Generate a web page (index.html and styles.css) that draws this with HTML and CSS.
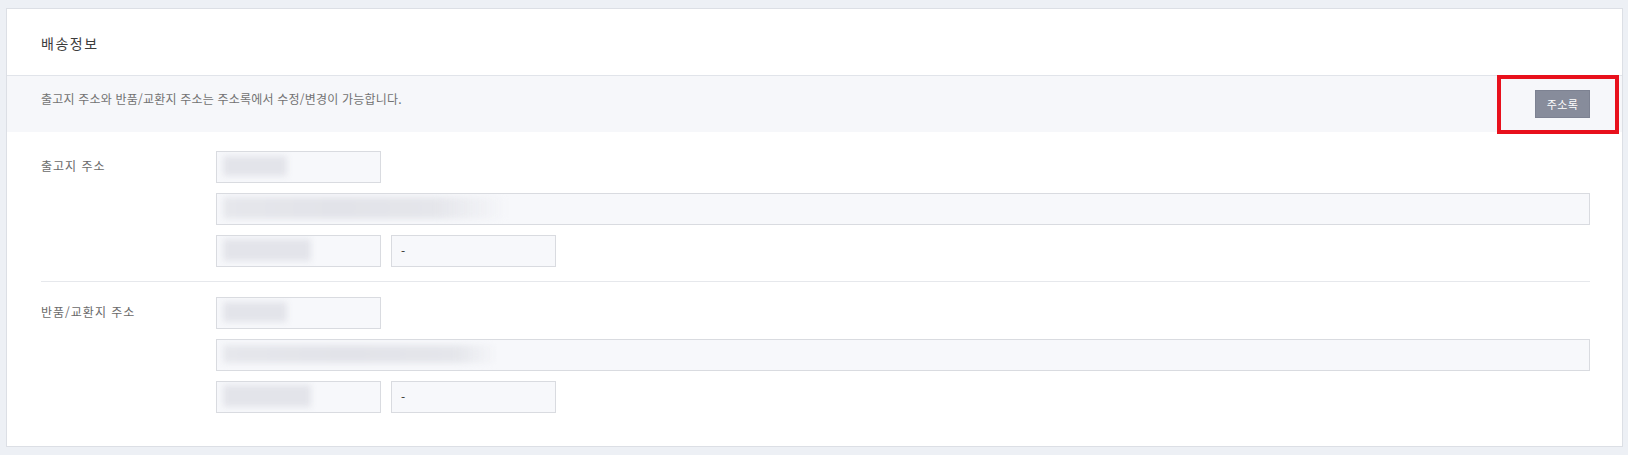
FILE: index.html
```html
<!DOCTYPE html>
<html lang="ko">
<head>
<meta charset="utf-8">
<title>배송정보</title>
<link rel="stylesheet" href="styles.css">
</head>
<body>
<div class="card">
  <div class="card-header">
    <h2 class="card-title">배송정보</h2>
  </div>
  <div class="notice">
    <p class="notice-text">출고지 주소와 반품/교환지 주소는 주소록에서 수정/변경이 가능합니다.</p>
    <button class="btn-book" type="button">주소록</button>
    <div class="highlight"></div>
  </div>
  <div class="sections">
    <div class="section">
      <div class="label">출고지 주소</div>
      <div class="fields">
        <div class="field short"><span class="blur b-name"></span></div>
        <div class="field full"><span class="blur b-addr"></span></div>
        <div class="pair">
          <div class="field short"><span class="blur b-phone"></span></div>
          <div class="field short"><span class="dash">-</span></div>
        </div>
      </div>
    </div>
    <div class="section">
      <div class="label">반품/교환지 주소</div>
      <div class="fields">
        <div class="field short"><span class="blur b-name"></span></div>
        <div class="field full"><span class="blur b-addr2"></span></div>
        <div class="pair">
          <div class="field short"><span class="blur b-phone"></span></div>
          <div class="field short"><span class="dash">-</span></div>
        </div>
      </div>
    </div>
  </div>
</div>
</body>
</html>
```

FILE: styles.css
```css
* { box-sizing: border-box; }

html, body { height: 100%; }

body {
  margin: 0;
  padding: 8px 5px 0 6px;
  background: #edf0f5;
  font-family: "Noto Sans CJK KR", "Noto Sans", sans-serif;
  color: #333;
}

.card {
  background: #fff;
  border: 1px solid #dcdfe5;
  height: 439px;
}

.card-header {
  height: 67px;
  border-bottom: 1px solid #e1e4ea;
  padding: 24px 34px 0;
}

.card-title {
  margin: 0;
  font-size: 14px;
  font-weight: 400;
  line-height: 20px;
  letter-spacing: 1.5px;
  color: #3c3c3c;
}

.notice {
  position: relative;
  display: flex;
  justify-content: space-between;
  align-items: flex-start;
  background: #f6f7fa;
  padding: 14px 32px 14px 34px;
  height: 56px;
}

.notice-text {
  margin: 0;
  font-size: 12px;
  line-height: 18px;
  letter-spacing: 0.2px;
  color: #727272;
}

.btn-book {
  width: 55px;
  height: 28px;
  border: 1px solid #7d8292;
  background: #878c9b;
  color: #fff;
  font-family: inherit;
  font-size: 11px;
  letter-spacing: 0.3px;
  padding: 0;
  line-height: 26px;
}

.highlight {
  position: absolute;
  right: 3px;
  top: -1px;
  width: 122px;
  height: 59px;
  border: 4px solid #e8101c;
  pointer-events: none;
}

.sections {
  padding: 4px 32px 20px 34px;
}

.section {
  display: flex;
  padding: 15px 0 14px;
}

.section + .section {
  border-top: 1px solid #e6e8ec;
}

.label {
  width: 175px;
  flex: none;
  padding-top: 6px;
  font-size: 12px;
  line-height: 18px;
  letter-spacing: 1px;
  color: #6a6a6a;
}

.fields {
  flex: 1;
  display: flex;
  flex-direction: column;
  gap: 10px;
}

.pair {
  display: flex;
  gap: 10px;
}

.field {
  height: 32px;
  background: #f7f8fb;
  border: 1px solid #d9dbe0;
  position: relative;
  overflow: hidden;
  display: flex;
  align-items: center;
  padding: 0 9px;
}

.field.short { width: 165px; }
.field.full { width: 100%; }

.blur {
  position: absolute;
  left: 6px;
  top: 3px;
  height: 22px;
  background: #e3e4ea;
  filter: blur(3px);
}

.b-name { width: 64px; top: 4px; height: 20px; }
.b-phone { width: 88px; height: 22px; }
.b-addr {
  width: 285px;
  height: 22px;
  background: linear-gradient(90deg, #e6e7ec 0%, #e2e3e9 40%, #e5e6eb 75%, rgba(235,236,241,0) 100%);
}
.b-addr2 {
  width: 275px;
  top: 5px;
  height: 18px;
  background: linear-gradient(90deg, #e6e7ec 0%, #e2e3e9 45%, #e5e6eb 85%, rgba(235,236,241,0) 100%);
}

.dash {
  font-size: 12px;
  color: #333;
  line-height: 18px;
}
```
